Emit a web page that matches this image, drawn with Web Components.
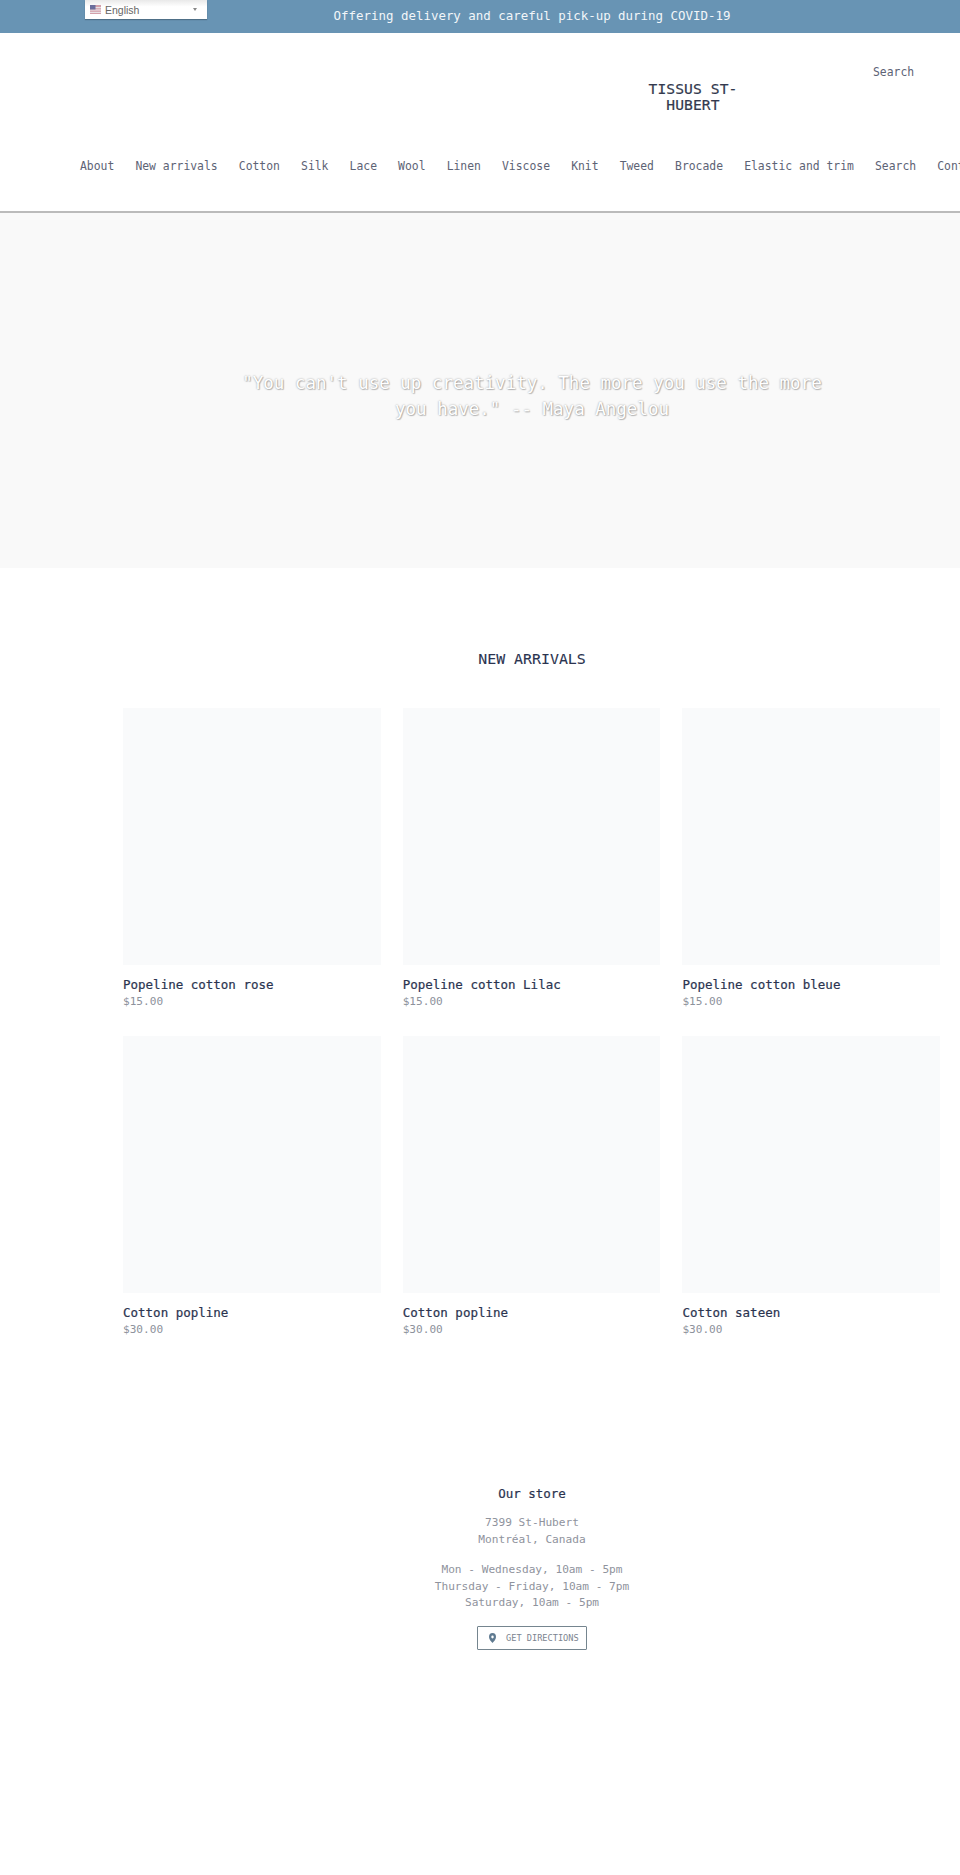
<!DOCTYPE html>
<html lang="en"><head><meta charset="utf-8"><title>Tissus St-Hubert</title>
<style>
html,body{margin:0;padding:0;background:#fff;overflow:hidden;height:1875px}
body{width:960px;font-family:"DejaVu Sans Mono",monospace}
tissus-page{display:block;width:1064px;height:1875px;position:relative}
</style></head><body>
<template id="t-bar"><style>
:host{display:block;height:33px;background:#6894b4;color:#f2f6f9;text-align:center;font:12.45px/32px "DejaVu Sans Mono",monospace}
</style><slot></slot></template>
<template id="t-lang"><style>
:host{position:absolute;left:85px;top:0;width:122px;height:19px;box-sizing:border-box;background:linear-gradient(#e9e9e9,#fff 35%,#fff);box-shadow:0 1px 1px rgba(0,0,0,.25);display:flex;align-items:center;padding:0 5px;gap:4px;font:10.5px "Liberation Sans",sans-serif;color:#666}
svg{flex:none}i{margin-left:auto;margin-right:5px;width:0;height:0;border:2.5px solid transparent;border-top:3px solid #888;border-bottom:0}
</style><svg width="11" height="9" viewBox="0 0 11 9"><rect width="11" height="9" fill="#d3a0aa"/><rect y="2" width="11" height="1.2" fill="#e8e0e4"/><rect y="4.4" width="11" height="1.2" fill="#e8e0e4"/><rect y="6.8" width="11" height="1.2" fill="#e8e0e4"/><rect width="5.5" height="4.5" fill="#6a6d9c"/></svg><span>English</span><i></i></template>
<template id="t-head"><style>
:host{display:block;height:178px;border-bottom:2px solid #bbb;color:#5d6375}
.top{display:grid;grid-template-columns:559px 108px 1fr;height:128px;padding-left:80px}
.logo{grid-column:2;align-self:start;margin-top:48px;text-align:center;font:500 14.6px/16px "DejaVu Sans Mono",monospace;color:#33394e;-webkit-text-stroke:.2px #33394e;letter-spacing:.1px}
.s{justify-self:start;margin:34px 0 0 126px;font:11.4px/1 "DejaVu Sans Mono",monospace}
</style><div class="top"><div class="logo">TISSUS ST-HUBERT</div><div class="s">Search</div></div><slot></slot></template>
<template id="t-nav"><style>
:host{display:flex;gap:21.1px;padding-left:80px;font:11.4px/1 "DejaVu Sans Mono",monospace;color:#5d6375;white-space:nowrap}
</style><slot></slot></template>
<template id="t-hero"><style>
:host{display:flex;align-items:center;justify-content:center;height:355px;width:100%;box-sizing:border-box;padding-top:10px;background:#f9f9f9}
p{margin:0;width:600px;text-align:center;color:#fff;font:17.5px/26px "DejaVu Sans Mono",monospace;text-shadow:0 0 2px rgba(0,0,0,.4),1px 1px 1px rgba(0,0,0,.2)}
</style><p><slot></slot></p></template>
<template id="t-sec"><style>
:host{display:block;padding:0 123px}
h2{margin:0;padding-top:82px;height:58px;text-align:center;font:500 14.9px/18px "DejaVu Sans Mono",monospace;color:#2b3450;-webkit-text-stroke:.1px #2b3450}
.g{display:grid;grid-template-columns:repeat(3,257.5px);column-gap:22.2px;row-gap:22px}
</style><h2>NEW ARRIVALS</h2><div class="g"><slot></slot></div></template>
<template id="t-prod"><style>
:host{display:block;height:306px}
.i{height:257px;background:#f9fafb}
h3{margin:11px 0 0;font:500 12.5px/18px "DejaVu Sans Mono",monospace;color:#2b3450;-webkit-text-stroke:.2px #2b3450}
.p{font:11.1px/16px "DejaVu Sans Mono",monospace;color:#8d929c}
</style><div class="i"></div><h3><slot></slot></h3><div class="p"><slot name="price"></slot></div></template>
<template id="t-store"><style>
:host{display:block;text-align:center;padding-top:143px;font:11.15px/16.5px "DejaVu Sans Mono",monospace;color:#8f939d}
h3{margin:0 0 12px;font:500 12.5px/18px "DejaVu Sans Mono",monospace;color:#2b3450;-webkit-text-stroke:.2px #2b3450}
p{margin:0 0 14px}
a{display:inline-flex;align-items:center;height:24px;width:110px;box-sizing:border-box;border:1px solid #75858f;border-radius:1px;padding:1px 0 0 11px;gap:10px;font-size:8.65px;color:#7c8490}
</style><h3>Our store</h3><p>7399 St-Hubert<br>Montréal, Canada</p><p>Mon - Wednesday, 10am - 5pm<br>Thursday - Friday, 10am - 7pm<br>Saturday, 10am - 5pm</p><a><svg width="7" height="10" viewBox="0 0 8 10" preserveAspectRatio="none"><path fill="#5f7a90" fill-rule="evenodd" d="M4 0a4 4 0 0 1 4 4c0 2.4-2.6 4.7-4 6C2.6 8.700 0 6.400 0 4a4 4 0 0 1 4-4zm0 2.600a1.400 1.400 0 1 0 0 2.800 1.400 1.400 0 0 0 0-2.800z"/></svg>GET DIRECTIONS</a></template>
<tissus-page>
<tissus-bar>Offering delivery and careful pick-up during COVID-19</tissus-bar>
<tissus-lang></tissus-lang>
<tissus-head><tissus-nav><span>About</span><span>New arrivals</span><span>Cotton</span><span>Silk</span><span>Lace</span><span>Wool</span><span>Linen</span><span>Viscose</span><span>Knit</span><span>Tweed</span><span>Brocade</span><span>Elastic and trim</span><span>Search</span><span>Contact</span></tissus-nav></tissus-head>
<tissus-hero>"You can't use up creativity. The more you use the more you have." -- Maya Angelou</tissus-hero>
<tissus-sec>
<tissus-prod>Popeline cotton rose<span slot="price">$15.00</span></tissus-prod>
<tissus-prod>Popeline cotton Lilac<span slot="price">$15.00</span></tissus-prod>
<tissus-prod>Popeline cotton bleue<span slot="price">$15.00</span></tissus-prod>
<tissus-prod>Cotton popline<span slot="price">$30.00</span></tissus-prod>
<tissus-prod>Cotton popline<span slot="price">$30.00</span></tissus-prod>
<tissus-prod>Cotton sateen<span slot="price">$30.00</span></tissus-prod>
</tissus-sec>
<tissus-store></tissus-store>
</tissus-page>
<script>
for(const [n,t] of Object.entries({bar:'t-bar',lang:'t-lang',head:'t-head',nav:'t-nav',hero:'t-hero',sec:'t-sec',prod:'t-prod',store:'t-store'})){
customElements.define('tissus-'+n,class extends HTMLElement{constructor(){super();this.attachShadow({mode:'open'}).append(document.getElementById(t).content.cloneNode(true))}});
}
</script>
</body></html>
